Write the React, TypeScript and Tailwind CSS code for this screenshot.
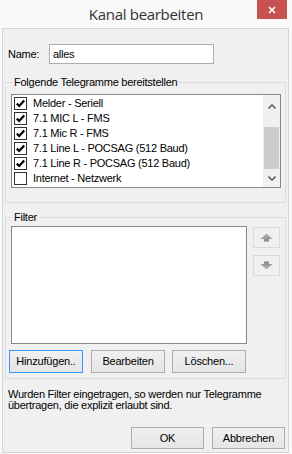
import { X } from "lucide-react"

const items = [
  { label: "Melder - Seriell", checked: true },
  { label: "7.1 MIC L - FMS", checked: true },
  { label: "7.1 Mic R - FMS", checked: true },
  { label: "7.1 Line L - POCSAG (512 Baud)", checked: true },
  { label: "7.1 Line R - POCSAG (512 Baud)", checked: true },
  { label: "Internet - Netzwerk", checked: false },
]

function CheckBox({ checked }: { checked: boolean }) {
  return (
    <span className="w-[13px] h-[13px] border border-[#333333] bg-white flex items-center justify-center shrink-0">
      {checked && (
        <svg width="11" height="11" viewBox="0 0 11 11">
          <path d="M1.8 5.6 L4.2 8 L9.2 2.4" fill="none" stroke="#000" strokeWidth="2.2" />
        </svg>
      )}
    </span>
  )
}

function WinButton({ children, focused, className = "" }: { children: React.ReactNode; focused?: boolean; className?: string }) {
  return (
    <button
      className={
        "border bg-gradient-to-b from-[#f0f0f0] to-[#e5e5e5] text-black text-[11px] leading-none tracking-[-0.2px] " +
        (focused ? "border-[#3399ff] " : "border-[#acacac] ") +
        className
      }
    >
      {children}
    </button>
  )
}

function ArrowButton({ down }: { down?: boolean }) {
  return (
    <div className="w-[27px] h-[21px] border border-[#dadada] bg-[#f0f0f0] flex items-center justify-center">
      <svg width="13" height="9" viewBox="0 0 13 9" className={down ? "rotate-180" : ""}>
        <defs>
          <linearGradient id={down ? "gd" : "gu"} x1="0" y1="0" x2="0" y2="1">
            <stop offset="0" stopColor="#b8b8b8" />
            <stop offset="1" stopColor="#858585" />
          </linearGradient>
        </defs>
        <path d="M6.5 0.5 L12.5 6 L9 6 L9 8.5 L4 8.5 L4 6 L0.5 6 Z" fill={`url(#${down ? "gd" : "gu"})`} />
      </svg>
    </div>
  )
}

export default function App() {
  return (
    <div className="w-[292px] h-[454px] bg-[#f9f9f9] text-[11px] tracking-[-0.25px] text-black font-['Liberation_Sans',Arial,sans-serif] overflow-hidden">
      <div className="h-[28px] grid grid-cols-[1fr_auto_1fr]">
        <div />
        <div className="pt-[4px] text-[15px] text-[#333333] font-['Open_Sans','Noto_Sans',sans-serif] leading-[20px] tracking-[-0.3px]">
          Kanal bearbeiten
        </div>
        <div className="flex justify-end">
          <div className="w-[30px] h-[19px] mr-[5px] bg-[#c75050] flex items-center justify-center">
            <X className="w-[10px] h-[10px] text-white" strokeWidth={4} />
          </div>
        </div>
      </div>

      <div className="ml-[2px] w-[287px] h-[425px] border border-[#d4d4d4] bg-[#f0f0f0] flex flex-col">
        <div className="flex items-center pt-[15px] pl-[5px]">
          <span className="w-[41px]">Name:</span>
          <div className="w-[165px] h-[20px] border border-[#abadb3] bg-white pl-[3px] flex items-center">alles</div>
        </div>

        <fieldset className="ml-[2px] mt-[11px] w-[281px] border border-[#dcdcdc]">
          <legend className="ml-[6px] px-[2px] h-[14px] leading-[14px]">Folgende Telegramme bereitstellen</legend>
          <div className="pl-[5px] pt-[5px] pb-[14px]">
            <div className="w-[270px] h-[94px] border border-[#828790] bg-white flex">
              <div className="flex-1 pt-[1px]">
                {items.map((item) => (
                  <div key={item.label} className="h-[15px] flex items-center pl-[2px] gap-[6px]">
                    <CheckBox checked={item.checked} />
                    <span className="leading-[15px]">{item.label}</span>
                  </div>
                ))}
              </div>
              <div className="w-[17px] bg-[#f0f0f0] flex flex-col items-center">
                <div className="h-[17px] flex items-center justify-center mt-[3px]">
                  <svg width="8" height="5" viewBox="0 0 8 5">
                    <path d="M0.5 4.5 L4 1 L7.5 4.5" fill="none" stroke="#606060" strokeWidth="1.6" />
                  </svg>
                </div>
                <div className="w-[15px] h-[43px] bg-[#cdcdcd] mt-[12px]" />
                <div className="h-[17px] flex items-center justify-center mt-[1px]">
                  <svg width="8" height="5" viewBox="0 0 8 5">
                    <path d="M0.5 0.5 L4 4 L7.5 0.5" fill="none" stroke="#606060" strokeWidth="1.6" />
                  </svg>
                </div>
              </div>
            </div>
          </div>
        </fieldset>

        <fieldset className="ml-[2px] mt-[7px] w-[281px] border border-[#dcdcdc]">
          <legend className="ml-[6px] px-[2px] h-[14px] leading-[14px]">Filter</legend>
          <div className="pl-[5px] pt-[2px] pb-[5px]">
            <div className="flex">
              <div className="w-[236px] h-[118px] border border-[#828790] bg-white" />
              <div className="ml-[6px] mt-[1px] flex flex-col gap-[7px]">
                <ArrowButton />
                <ArrowButton down />
              </div>
            </div>
            <div className="flex mt-[6px] -ml-[2px]">
              <WinButton focused className="w-[74px] h-[23px]">Hinzufügen..</WinButton>
              <WinButton className="w-[74px] h-[23px] ml-[8px]">Bearbeiten</WinButton>
              <WinButton className="w-[74px] h-[23px] ml-[7px]">Löschen...</WinButton>
            </div>
          </div>
        </fieldset>

        <p className="pl-[5px] mt-[10px] leading-[11px]">
          Wurden Filter eingetragen, so werden nur Telegramme
          <br />
          übertragen, die explizit erlaubt sind.
        </p>

        <div className="flex justify-end gap-[8px] pr-[3px] mt-auto mb-[3px]">
          <WinButton className="w-[73px] h-[22px]">OK</WinButton>
          <WinButton className="w-[73px] h-[22px]">Abbrechen</WinButton>
        </div>
      </div>
    </div>
  )
}
